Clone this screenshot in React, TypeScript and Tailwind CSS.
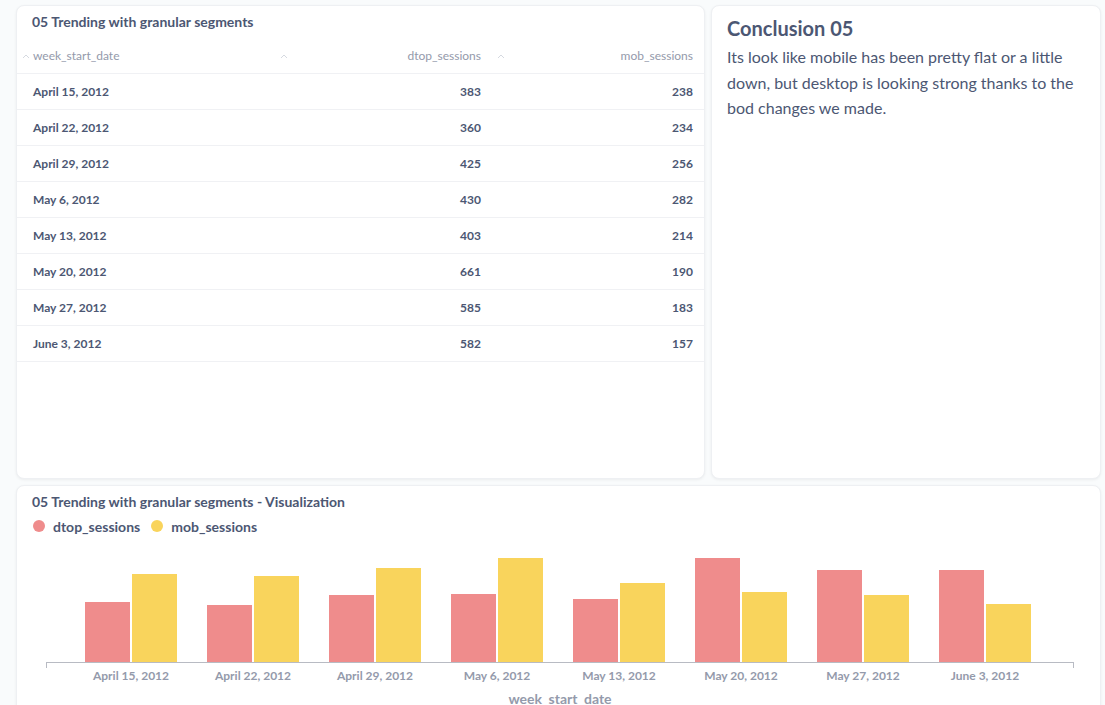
import React from "react";

const rows = [
  { d: "April 15, 2012", a: 383, m: 238 },
  { d: "April 22, 2012", a: 360, m: 234 },
  { d: "April 29, 2012", a: 425, m: 256 },
  { d: "May 6, 2012", a: 430, m: 282 },
  { d: "May 13, 2012", a: 403, m: 214 },
  { d: "May 20, 2012", a: 661, m: 190 },
  { d: "May 27, 2012", a: 585, m: 183 },
  { d: "June 3, 2012", a: 582, m: 157 },
];

const font = { fontFamily: "Lato, 'Noto Sans', sans-serif" };

function Caret({ className = "" }: { className?: string }) {
  return (
    <svg width="8" height="5" viewBox="0 0 8 5" className={className}>
      <path d="M1 4 L4 1 L7 4" fill="none" stroke="#d5d9e0" strokeWidth="1" />
    </svg>
  );
}

export default function App() {
  return (
    <div className="min-h-[705px] bg-[#f9fbfc] pl-[16px] pr-[4px] pt-[5px]" style={font}>
      <div className="flex gap-[6px]">
        {/* Table card */}
        <div className="w-[689px] h-[474px] bg-white rounded-[8px] border border-[#eef0f3] shadow-[0_1px_3px_rgba(0,0,0,0.06)] flex flex-col overflow-hidden">
          <div className="h-[33px] pt-[7px] pl-[15px] text-[14px] leading-[17px] font-bold text-[#4c5773]">
            05 Trending with granular segments
          </div>
          <div className="flex h-[35px] border-b border-[#f0f1f4] text-[12px] text-[#949aab] items-center">
            <div className="w-[258px] flex items-center pl-[5px] gap-[3px]">
              <Caret />
              <span>week_start_date</span>
            </div>
            <div className="w-[217px] flex items-center justify-between pl-[5px] pr-[11px]">
              <Caret />
              <span>dtop_sessions</span>
            </div>
            <div className="flex-1 flex items-center justify-between pl-[5px] pr-[11px]">
              <Caret />
              <span>mob_sessions</span>
            </div>
          </div>
          {rows.map((r) => (
            <div
              key={r.d}
              className="flex h-[36px] border-b border-[#f0f1f4] items-center text-[12px] font-bold text-[#4c5773]"
            >
              <div className="w-[258px] pl-[16px]">{r.d}</div>
              <div className="w-[217px] text-right pr-[11px]">{r.a}</div>
              <div className="flex-1 text-right pr-[11px]">{r.m}</div>
            </div>
          ))}
        </div>
        {/* Conclusion card */}
        <div className="flex-1 h-[474px] bg-white rounded-[8px] border border-[#eef0f3] shadow-[0_1px_3px_rgba(0,0,0,0.06)] px-[15px] pt-[10px] text-[#4c5773]">
          <div className="text-[20px] leading-[24px] font-bold">Conclusion 05</div>
          <p className="mt-[4px] text-[16px] leading-[25.5px]">
            Its look like mobile has been pretty flat or a little down, but desktop is looking strong thanks to the
            bod changes we made.
          </p>
        </div>
      </div>

      {/* Chart card */}
      <div className="mt-[6px] h-[300px] bg-white rounded-[8px] border border-[#eef0f3] shadow-[0_1px_3px_rgba(0,0,0,0.06)] text-[#4c5773]">
        <div className="pt-[7px] pl-[15px] text-[14px] leading-[17px] font-bold">
          05 Trending with granular segments - Visualization
        </div>
        <div className="mt-[6px] h-[20px] pl-[16px] flex items-center gap-[11px] text-[14px] font-bold">
          <div className="flex items-center gap-[8px]">
            <span className="w-[12px] h-[12px] rounded-full bg-[#ef8c8c]" />
            <span>dtop_sessions</span>
          </div>
          <div className="flex items-center gap-[8px]">
            <span className="w-[12px] h-[12px] rounded-full bg-[#f9d45c]" />
            <span>mob_sessions</span>
          </div>
        </div>
        <div className="ml-[29px] w-[1028px]">
          <div className="h-[126px] flex items-end pl-[24px] pr-[28px]">
            {rows.map((r) => (
              <div key={r.d} className="flex-1 flex items-end justify-center gap-[2px]">
                <div className="w-[45px] bg-[#ef8c8c]" style={{ height: (r.a / 661) * 104 }} />
                <div className="w-[45px] bg-[#f9d45c]" style={{ height: (r.m / 282) * 104 }} />
              </div>
            ))}
          </div>
          <div className="relative h-[1px] bg-[#b8bbc3]">
            <div className="absolute left-0 top-0 w-[1px] h-[6px] bg-[#b8bbc3]" />
            <div className="absolute right-0 top-0 w-[1px] h-[6px] bg-[#b8bbc3]" />
          </div>
          <div className="flex pl-[24px] pr-[28px] pt-[4px] h-[22px] text-[12px] leading-[18px] font-bold text-[#949aab]">
            {rows.map((r) => (
              <div key={r.d} className="flex-1 text-center">
                {r.d}
              </div>
            ))}
          </div>
          <div className="text-center text-[14px] leading-[18px] font-bold text-[#949aab] mt-[5px]">
            week_start_date
          </div>
        </div>
      </div>
    </div>
  );
}
